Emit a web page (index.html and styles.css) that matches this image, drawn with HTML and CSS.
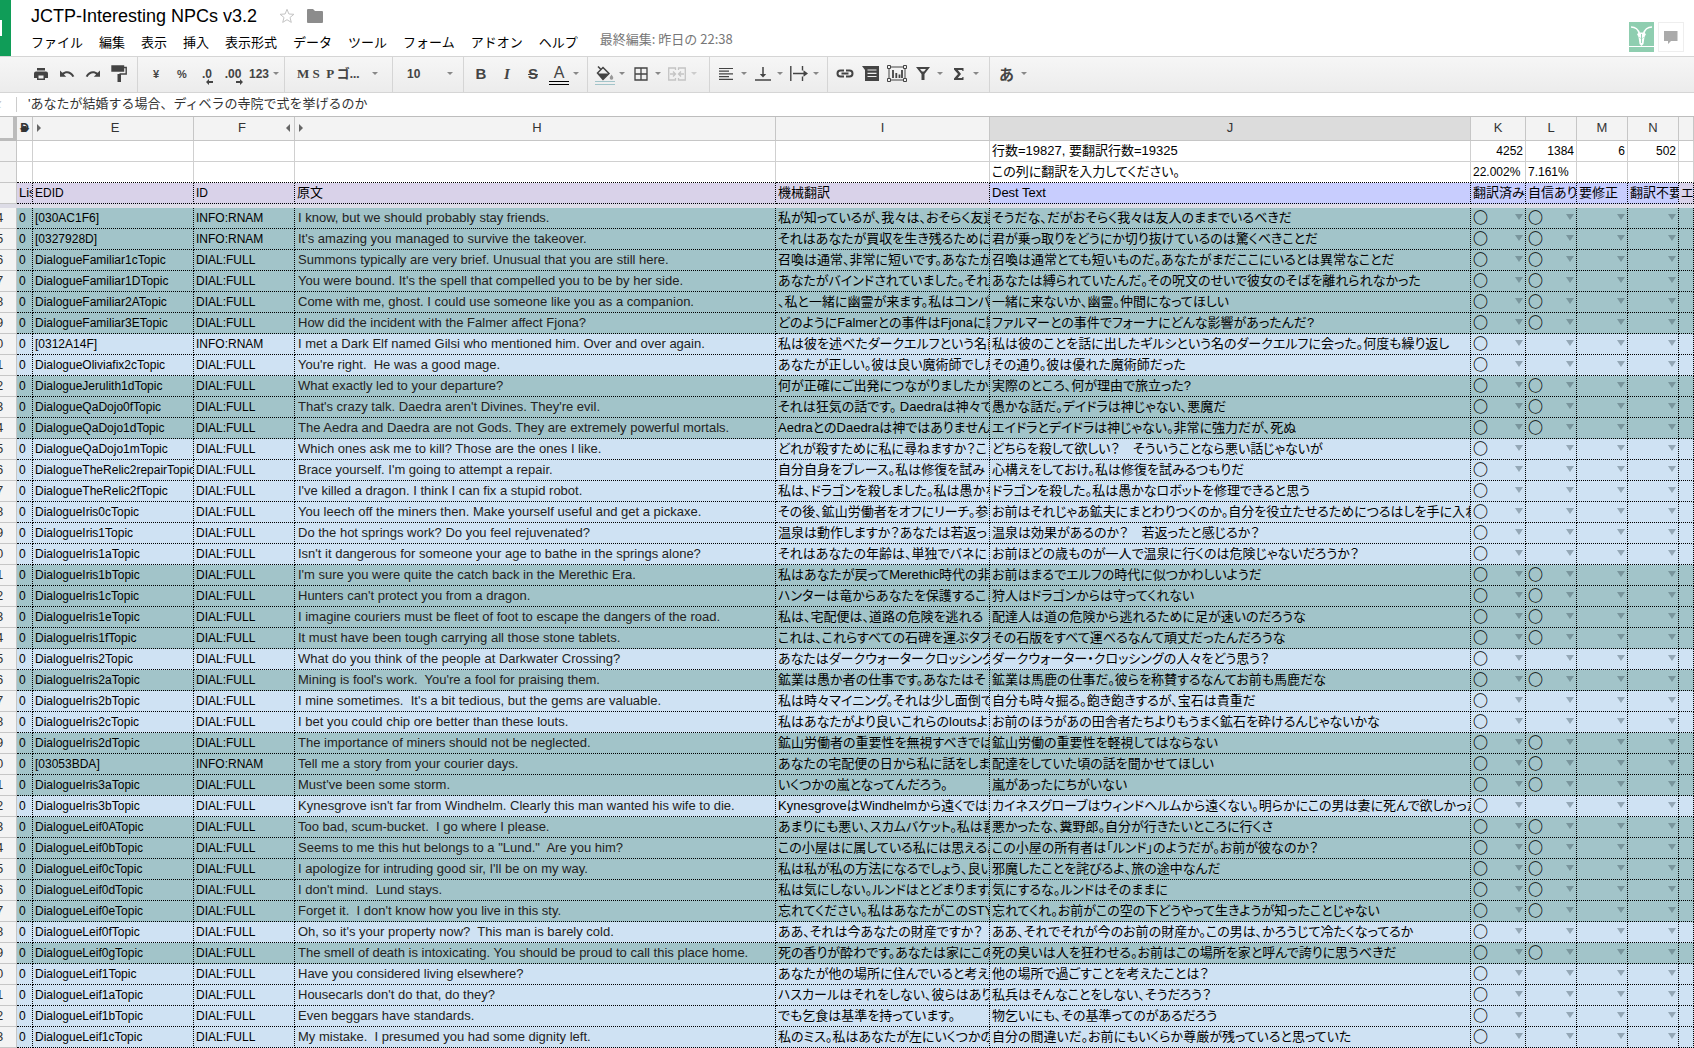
FILE: index.html
```html
<!DOCTYPE html>
<html lang="ja">
<head>
<meta charset="utf-8">
<meta name="viewport" content="width=device-width, initial-scale=1">
<title>JCTP-Interesting NPCs v3.2</title>
<link rel="stylesheet" href="styles.css">
</head>
<body>
<header class="masthead">
  <a class="home" href="#" aria-label="スプレッドシート"><span class="home-mark"></span></a>
  <div class="doc">
    <div class="doc-title">
      <h1>JCTP-Interesting NPCs v3.2</h1>
      <button class="plain" aria-label="スター"><svg width="16" height="16" viewBox="0 0 16 16"><path d="M8 1.3l1.9 4.7 5 .3-3.9 3.2 1.3 4.9L8 11.7l-4.3 2.7L5 9.500 1.100 6.300l5-.3z" fill="none" stroke="#c4c4c4"/></svg></button>
      <button class="plain" aria-label="フォルダ"><svg width="16" height="14" viewBox="0 0 16 14"><path d="M0 1a1 1 0 0 1 1-1h5l2 2h7a1 1 0 0 1 1 1v10a1 1 0 0 1-1 1H1a1 1 0 0 1-1-1z" fill="#8c8c8c"/></svg></button>
    </div>
    <nav class="menus">
      <button>ファイル</button><button>編集</button><button>表示</button><button>挿入</button><button>表示形式</button><button>データ</button><button>ツール</button><button>フォーム</button><button>アドオン</button><button>ヘルプ</button>
      <a class="last-edit" href="#">最終編集: 昨日の 22:38</a>
    </nav>
  </div>
  <div class="people">
    <button class="avatar" aria-label="共同編集者"><svg width="25" height="24" viewBox="0 0 25 24"><path d="M2 4c5 0 7.500 3 8.500 7M23 4c-5 0-7.500 3-8.500 7" fill="none" stroke="#fff" stroke-width="1.500"/><path d="M8 11l2.500-1.500h4L17 11l-1.500 3-1 7-2 2-2-2-1-7z" fill="#fff"/><path d="M12.500 11v9M10.500 14.500l1 .8M14.500 14.500l-1 .8" stroke="#8fceb0" stroke-width=".9"/></svg></button>
    <button class="chat" aria-label="コメント"><svg width="14" height="13" viewBox="0 0 14 13"><path d="M0 0h13.500v10H7l-3 3v-3H0z" fill="#aaa"/></svg></button>
  </div>
</header>

<div class="toolbar" role="toolbar" aria-label="ツールバー">
  <div class="group g-file">
    <button aria-label="印刷"><svg width="16" height="16" viewBox="0 0 16 16"><path d="M4 2h8v2.500H4zM3 5.500h10a2 2 0 0 1 2 2V12h-3v2H4v-2H1V7.500a2 2 0 0 1 2-2zm2.500 4v3h5v-3z" fill="#444" fill-rule="evenodd"/></svg></button>
    <button aria-label="元に戻す"><svg width="16" height="16" viewBox="0 0 16 16"><path d="M1 4.500v6.200h6.200L4.900 8.400C7 6.500 11 6.500 13.400 11l1.900-.8C12.500 4.500 7 4 3.300 6.800z" fill="#444"/></svg></button>
    <button aria-label="やり直し"><svg width="16" height="16" viewBox="0 0 16 16"><path d="M15 4.500v6.200H8.800l2.300-2.300C9 6.500 5 6.500 2.600 11l-1.900-.8C3.500 4.500 9 4 12.700 6.800z" fill="#444"/></svg></button>
    <button aria-label="書式のコピー"><svg width="16" height="18" viewBox="0 0 16 18"><path d="M1 1h11.500v5H1zM12 2.500h3.200V9H8.500" fill="none" stroke="#444" stroke-width="1.400"/><path d="M1 1h11.500v5H1zM6.500 9h3.500v8H6.500z" fill="#444"/></svg></button>
  </div>
  <div class="group g-num">
    <button class="bold">¥</button>
    <button class="bold">%</button>
    <button class="bold dec" aria-label="小数点以下の桁数を減らす">.0<svg width="8" height="6" viewBox="0 0 8 6"><path d="M0 3l3-3v2h4v2H3v2z" fill="#444"/></svg></button>
    <button class="bold dec" aria-label="小数点以下の桁数を増やす">.00<svg width="8" height="6" viewBox="0 0 8 6"><path d="M8 3L5 0v2H1v2h4v2z" fill="#444"/></svg></button>
    <button class="bold more">123<i class="caret"></i></button>
  </div>
  <div class="group g-font">
    <button class="picker serif"><span>M S&nbsp; P ゴ...</span><i class="caret"></i></button>
  </div>
  <div class="group g-size">
    <button class="picker"><span>10</span><i class="caret"></i></button>
  </div>
  <div class="group g-style">
    <button aria-label="太字" class="glyph"><b>B</b></button>
    <button aria-label="斜体" class="glyph slant"><i>I</i></button>
    <button aria-label="取り消し線" class="glyph"><s>S</s></button>
    <button aria-label="テキストの色" class="drop"><span class="swatch ink">A</span><i class="caret"></i></button>
  </div>
  <div class="group g-cell">
    <button aria-label="塗りつぶしの色" class="drop"><span class="swatch fill"><svg width="18" height="15" viewBox="0 0 18 15"><path d="M2 .5l3.500 3.500M1.500 7L7 1.500 13 7.500 7 13.500z" fill="none" stroke="#444" stroke-width="1.500"/><path d="M1.500 7.500h11L7 13.500z" fill="#444"/><path d="M15.500 8.500c1.200 1.800 1.800 2.600 1.800 3.500a1.800 1.800 0 0 1-3.600 0c0-.9.600-1.700 1.800-3.500z" fill="#999"/></svg></span><i class="caret"></i></button>
    <button aria-label="枠線" class="drop"><span class="ico"><svg width="14" height="14" viewBox="0 0 14 14"><path d="M1 1h12v12H1zM7 1v12M1 7h12" fill="none" stroke="#444" stroke-width="1.300"/></svg></span><i class="caret"></i></button>
    <button aria-label="セルを結合" class="drop" disabled><span class="ico"><svg width="18" height="14" viewBox="0 0 18 14"><path d="M7.500 3V1H.7v12h6.800v-2M10.500 3V1h6.800v12h-6.800v-2" fill="none" stroke="#c4c4c4" stroke-width="1.300"/><path d="M2 7h5M5 4.500L7.500 7 5 9.500M16 7h-5M13 4.500L10.500 7 13 9.500" fill="none" stroke="#c4c4c4" stroke-width="1.300"/></svg></span><i class="caret"></i></button>
  </div>
  <div class="group g-align">
    <button aria-label="水平方向の配置" class="drop"><span class="ico"><svg width="15" height="12" viewBox="0 0 15 12"><path d="M0 .5h14M0 3.200h10M0 5.900h14M0 8.600h10M0 11.300h14" stroke="#444" stroke-width="1.200"/></svg></span><i class="caret"></i></button>
    <button aria-label="垂直方向の配置" class="drop"><span class="ico"><svg width="16" height="15" viewBox="0 0 16 15"><path d="M0 14h16M8 1v8" stroke="#444" stroke-width="1.500"/><path d="M4.800 8h6.400L8 11.500z" fill="#444"/></svg></span><i class="caret"></i></button>
    <button aria-label="テキストの折り返し" class="drop"><span class="ico"><svg width="18" height="15" viewBox="0 0 18 15"><path d="M.8 0v15M12.500 0v4.500M12.500 10.500V15M3 7.500h11" stroke="#444" stroke-width="1.400"/><path d="M13.500 4.300L18 7.500l-4.500 3.200z" fill="#444"/></svg></span><i class="caret"></i></button>
  </div>
  <div class="group g-insert">
    <button aria-label="リンク"><svg width="18" height="9" viewBox="0 0 18 9"><path d="M8 7.500H4.500a3 3 0 0 1 0-6H8M10 1.500h3.500a3 3 0 0 1 0 6H10M5.500 4.500h7" fill="none" stroke="#444" stroke-width="2"/></svg></button>
    <button aria-label="コメントを挿入"><svg width="18" height="15" viewBox="0 0 18 15"><path d="M0 0h17v15H3V4z" fill="#444"/><path d="M5.500 4h9M5.500 7.300h9M5.500 10.500h9" stroke="#eee" stroke-width="1.200"/></svg></button>
    <button aria-label="グラフを挿入"><svg width="20" height="17" viewBox="0 0 20 17"><path d="M2 2h16v13H2z" fill="none" stroke="#444"/><path d="M.5.500h3v3h-3zM16.500.500h3v3h-3zM.5 13.500h3v3h-3zM16.500 13.500h3v3h-3z" fill="#f2f2f2" stroke="#444"/><path d="M6 5v8M9.300 8v5M12.500 9.500V13M15 5v8" stroke="#444" stroke-width="1.800"/></svg></button>
    <button aria-label="フィルタ" class="drop"><span class="ico"><svg width="14" height="13" viewBox="0 0 14 13"><path d="M0 0h14L8.500 7v6h-3V7zm4 2l2 2.500h2L10 2z" fill="#444" fill-rule="evenodd"/></svg></span><i class="caret"></i></button>
    <button aria-label="関数" class="drop"><span class="ico"><svg width="10" height="12" viewBox="0 0 10 12"><path d="M0 0h9.500v3H8.300V2H3.800l3.200 4-3.200 4h4.500V9h1.200v3H0v-1.500L4 6 0 1.500z" fill="#444"/></svg></span><i class="caret"></i></button>
  </div>
  <div class="group g-ime">
    <button class="drop"><span class="ico ime">あ</span><i class="caret"></i></button>
  </div>
</div>

<div class="formula">
  <label class="fx" for="formula-input">fx</label>
  <input id="formula-input" type="text" value="'あなたが結婚する場合、ディベラの寺院で式を挙げるのか">
</div>

<table class="sheet">
  <colgroup><col class="c-num"><col class="c-d"><col class="c-e"><col class="c-f"><col class="c-h"><col class="c-i"><col class="c-j"><col class="c-k"><col class="c-l"><col class="c-l"><col class="c-l"><col></colgroup>
  <thead>
    <tr class="letters">
      <th class="corner"></th>
      <th class="tiny"><span>◂</span>D<span>▸</span></th>
      <th><div class="letter"><i class="tri right"></i><span>E</span></div></th>
      <th><div class="letter"><span>F</span><i class="tri left"></i></div></th>
      <th><div class="letter"><i class="tri right"></i><span>H</span></div></th>
      <th>I</th><th class="current">J</th><th>K</th><th>L</th><th>M</th><th>N</th><th></th>
    </tr>
    <tr class="free">
      <th></th><td></td><td></td><td></td><td></td><td></td><td>行数=19827, 要翻訳行数=19325</td><td class="n">4252</td><td class="n">1384</td><td class="n">6</td><td class="n">502</td><td></td>
    </tr>
    <tr class="free above-names">
      <th></th><td></td><td></td><td></td><td></td><td></td><td>この列に翻訳を入力してください。</td><td class="latin">22.002%</td><td class="latin">7.161%</td><td></td><td></td><td></td>
    </tr>
    <tr class="names">
      <th></th><td>List</td><td class="latin">EDID</td><td class="latin">ID</td><td>原文</td><td>機械翻訳</td><td class="entry">Dest Text</td><td class="entry">翻訳済み</td><td class="entry">自信あり</td><td class="entry">要修正</td><td class="entry">翻訳不要</td><td>エ</td>
    </tr>
    <tr class="freeze"><td colspan="12"></td></tr>
  </thead>
  <tbody id="rows"></tbody>
</table>
<script src="script.js"></script>
</body>
</html>
```

FILE: script.js
```js
// EDID | ID | source text | machine translation | translation | confident (1/0)
const data = `
[030AC1F6]|INFO:RNAM|I know, but we should probably stay friends.|私が知っているが、我々は、おそらく友達|そうだな、だがおそらく我々は友人のままでいるべきだ|1
[0327928D]|INFO:RNAM|It's amazing you managed to survive the takeover.|それはあなたが買収を生き残るために|君が乗っ取りをどうにか切り抜けているのは驚くべきことだ|1
DialogueFamiliar1cTopic|DIAL:FULL|Summons typically are very brief. Unusual that you are still here.|召喚は通常、非常に短いです。あなたが|召喚は通常とても短いものだ。あなたがまだここにいるとは異常なことだ|1
DialogueFamiliar1DTopic|DIAL:FULL|You were bound. It's the spell that compelled you to be by her side.|あなたがバインドされていました。それは|あなたは縛られていたんだ。その呪文のせいで彼女のそばを離れられなかった|1
DialogueFamiliar2ATopic|DIAL:FULL|Come with me, ghost. I could use someone like you as a companion.|、私と一緒に幽霊が来ます。私はコンパ|一緒に来ないか、幽霊。仲間になってほしい|1
DialogueFamiliar3ETopic|DIAL:FULL|How did the incident with the Falmer affect Fjona?|どのようにFalmerとの事件はFjonaに影響|ファルマーとの事件でフォーナにどんな影響があったんだ?|1
[0312A14F]|INFO:RNAM|I met a Dark Elf named Gilsi who mentioned him. Over and over again.|私は彼を述べたダークエルフという名前|私は彼のことを話に出したギルシという名のダークエルフに会った。何度も繰り返し|0
DialogueOliviafix2cTopic|DIAL:FULL|You're right.  He was a good mage.|あなたが正しい。彼は良い魔術師でした|その通り。彼は優れた魔術師だった|0
DialogueJerulith1dTopic|DIAL:FULL|What exactly led to your departure?|何が正確にご出発につながりましたか|実際のところ、何が理由で旅立った?|1
DialogueQaDojo0fTopic|DIAL:FULL|That's crazy talk. Daedra aren't Divines. They're evil.|それは狂気の話です。 Daedraは神々で|愚かな話だ。デイドラは神じゃない、悪魔だ|1
DialogueQaDojo1dTopic|DIAL:FULL|The Aedra and Daedra are not Gods. They are extremely powerful mortals.|AedraとのDaedraは神ではありません。|エイドラとデイドラは神じゃない。非常に強力だが、死ぬ|1
DialogueQaDojo1mTopic|DIAL:FULL|Which ones ask me to kill? Those are the ones I like.|どれが殺すために私に尋ねますか？こ|どちらを殺して欲しい？　そういうことなら悪い話じゃないが|0
DialogueTheRelic2repairTopic|DIAL:FULL|Brace yourself. I'm going to attempt a repair.|自分自身をブレース。私は修復を試み|心構えをしておけ。私は修復を試みるつもりだ|0
DialogueTheRelic2fTopic|DIAL:FULL|I've killed a dragon. I think I can fix a stupid robot.|私は、ドラゴンを殺しました。私は愚かな|ドラゴンを殺した。私は愚かなロボットを修理できると思う|0
DialogueIris0cTopic|DIAL:FULL|You leech off the miners then. Make yourself useful and get a pickaxe.|その後、鉱山労働者をオフにリーチ。参|お前はそれじゃあ鉱夫にまとわりつくのか。自分を役立たせるためにつるはしを手に入れ|0
DialogueIris1Topic|DIAL:FULL|Do the hot springs work? Do you feel rejuvenated?|温泉は動作しますか？あなたは若返っ|温泉は効果があるのか？　若返ったと感じるか？|0
DialogueIris1aTopic|DIAL:FULL|Isn't it dangerous for someone your age to bathe in the springs alone?|それはあなたの年齢は、単独でバネに|お前ほどの歳ものが一人で温泉に行くのは危険じゃないだろうか？|0
DialogueIris1bTopic|DIAL:FULL|I'm sure you were quite the catch back in the Merethic Era.|私はあなたが戻ってMerethic時代の非|お前はまるでエルフの時代に似つかわしいようだ|1
DialogueIris1cTopic|DIAL:FULL|Hunters can't protect you from a dragon.|ハンターは竜からあなたを保護すること|狩人はドラゴンからは守ってくれない|1
DialogueIris1eTopic|DIAL:FULL|I imagine couriers must be fleet of foot to escape the dangers of the road.|私は、宅配便は、道路の危険を逃れる|配達人は道の危険から逃れるために足が速いのだろうな|1
DialogueIris1fTopic|DIAL:FULL|It must have been tough carrying all those stone tablets.|これは、これらすべての石碑を運ぶタフ|その石版をすべて運べるなんて頑丈だったんだろうな|1
DialogueIris2Topic|DIAL:FULL|What do you think of the people at Darkwater Crossing?|あなたはダークウォータークロッシング|ダークウォーター・クロッシングの人々をどう思う？|0
DialogueIris2aTopic|DIAL:FULL|Mining is fool's work.  You're a fool for praising them.|鉱業は愚か者の仕事です。あなたはそ|鉱業は馬鹿の仕事だ。彼らを称賛するなんてお前も馬鹿だな|1
DialogueIris2bTopic|DIAL:FULL|I mine sometimes.  It's a bit tedious, but the gems are valuable.|私は時々マイニング。それは少し面倒で|自分も時々掘る。飽き飽きするが、宝石は貴重だ|0
DialogueIris2cTopic|DIAL:FULL|I bet you could chip ore better than these louts.|私はあなたがより良いこれらのloutsより|お前のほうがあの田舎者たちよりもうまく鉱石を砕けるんじゃないかな|0
DialogueIris2dTopic|DIAL:FULL|The importance of miners should not be neglected.|鉱山労働者の重要性を無視すべきでは|鉱山労働の重要性を軽視してはならない|1
[03053BDA]|INFO:RNAM|Tell me a story from your courier days.|あなたの宅配便の日から私に話をしま|配達をしていた頃の話を聞かせてほしい|1
DialogueIris3aTopic|DIAL:FULL|Must've been some storm.|いくつかの嵐となってんだろう。|嵐があったにちがいない|1
DialogueIris3bTopic|DIAL:FULL|Kynesgrove isn't far from Windhelm. Clearly this man wanted his wife to die.|KynesgroveはWindhelmから遠くではあり|カイネスグローブはウィンドヘルムから遠くない。明らかにこの男は妻に死んで欲しかった|0
DialogueLeif0ATopic|DIAL:FULL|Too bad, scum-bucket.  I go where I please.|あまりにも悪い、スカムバケット。私は喜|悪かったな、糞野郎。自分が行きたいところに行くさ|1
DialogueLeif0bTopic|DIAL:FULL|Seems to me this hut belongs to a "Lund."  Are you him?|この小屋はに属している私には思える。|この小屋の所有者は「ルンド」のようだが。お前が彼なのか？|1
DialogueLeif0cTopic|DIAL:FULL|I apologize for intruding good sir, I'll be on my way.|私は私が私の方法になるでしょう、良い|邪魔したことを詫びるよ、旅の途中なんだ|1
DialogueLeif0dTopic|DIAL:FULL|I don't mind.  Lund stays.|私は気にしない。ルンドはとどまります。|気にするな。ルンドはそのままに|1
DialogueLeif0eTopic|DIAL:FULL|Forget it.  I don't know how you live in this sty.|忘れてください。私はあなたがこのSTY|忘れてくれ。お前がこの空の下どうやって生きようが知ったことじゃない|1
DialogueLeif0fTopic|DIAL:FULL|Oh, so it's your property now?  This man is barely cold.|ああ、それは今あなたの財産ですか？|ああ、それでそれが今のお前の財産か。この男は、かろうじて冷たくなってるか|0
DialogueLeif0gTopic|DIAL:FULL|The smell of death is intoxicating. You should be proud to call this place home.|死の香りが酔わです。あなたは家にこの|死の臭いは人を狂わせる。お前はこの場所を家と呼んで誇りに思うべきだ|1
DialogueLeif1Topic|DIAL:FULL|Have you considered living elsewhere?|あなたが他の場所に住んでいると考え|他の場所で過ごすことを考えたことは？|0
DialogueLeif1aTopic|DIAL:FULL|Housecarls don't do that, do they?|ハスカールはそれをしない、彼らはあり|私兵はそんなことをしない、そうだろう？|0
DialogueLeif1bTopic|DIAL:FULL|Even beggars have standards.|でも乞食は基準を持っています。|物乞いにも、その基準ってのがあるだろう|0
DialogueLeif1cTopic|DIAL:FULL|My mistake.  I presumed you had some dignity left.|私のミス。私はあなたが左にいくつかの|自分の間違いだ。お前にもいくらか尊厳が残っていると思っていた|0
`.trim().split('\n').map(line => line.split('|'));

const flags = ['翻訳済み', '自信あり', '要修正', '翻訳不要'];
const body = document.getElementById('rows');

function cell(tr, text, className) {
  const td = tr.insertCell();
  td.textContent = text;
  if (className) td.className = className;
  return td;
}

data.forEach(([edid, id, source, machine, dest, sure], index) => {
  const tr = body.insertRow();
  tr.className = sure === '1' ? 'sure' : 'draft';
  const th = document.createElement('th');
  th.scope = 'row';
  th.textContent = (index + 4) % 10;
  tr.append(th);
  cell(tr, '0', 'latin');
  cell(tr, edid, 'latin');
  cell(tr, id, 'latin');
  cell(tr, source, 'source');
  cell(tr, machine);
  cell(tr, dest);
  flags.forEach((name, i) => {
    const select = document.createElement('select');
    select.setAttribute('aria-label', name);
    select.add(new Option('', ''));
    select.add(new Option('○', '○'));
    select.value = i === 0 || (i === 1 && sure === '1') ? '○' : '';
    cell(tr, '', 'flag').append(select);
  });
  cell(tr, '');
});
```

FILE: styles.css
```css
* { box-sizing: border-box; }

body {
  margin: 0;
  overflow: hidden;
  background: #fff;
  color: #000;
  font: 13px/20px "Liberation Sans", "Noto Sans CJK JP", sans-serif;
}

button, input, select { margin: 0; font: inherit; color: inherit; }
button { padding: 0; border: 0; background: none; }
svg { display: block; }

/* title and menus */
.masthead { display: flex; height: 56px; }
.home { flex: none; display: flex; align-items: center; width: 11px; background: #109d58; }
.home-mark { width: 2px; height: 16px; background: #fff; }
.doc { flex: 1; padding: 4px 0 0 20px; }
.doc-title { display: flex; align-items: center; height: 24px; }
h1 { margin: 0 22px 0 0; font-size: 18px; line-height: 24px; font-weight: 400; }
.doc-title .plain { margin-right: 12px; }
.menus { display: flex; gap: 16px; height: 28px; align-items: center; white-space: nowrap; font-family: "Noto Sans CJK JP", sans-serif; }
.last-edit { margin: -6px 0 0 6px; color: #777; text-decoration: none; }
.people { flex: none; display: flex; gap: 4px; padding: 22px 10px 0 0; }
.avatar { width: 25px; height: 30px; background: #8fceb0; border-bottom: 5px solid #8fceb0; box-shadow: inset 0 -1px #fff; }
.chat { display: flex; align-items: center; justify-content: center; width: 26px; height: 30px; border: 1px solid #eee; }

/* toolbar */
.toolbar { display: flex; height: 37px; border: solid #d5d5d5; border-width: 1px 0; background: linear-gradient(#f6f6f6, #ececec); color: #444; }
.group { flex: none; display: flex; align-items: center; padding: 0 0 2px 4px; border-right: 1px solid #d5d5d5; }
.group:last-child { border: 0; }
.g-file { width: 138px; padding-left: 28px; }
.g-num { width: 147px; padding-left: 5px; }
.g-font { width: 108px; }
.g-size { width: 71px; }
.g-style { width: 124px; }
.g-cell { width: 122px; }
.g-align { width: 118px; }
.g-insert { width: 162px; }
.group button { display: flex; align-items: center; justify-content: center; width: 26px; height: 28px; white-space: nowrap; }
.group .bold { font-size: 12px; font-weight: 700; }
.group .bold:nth-child(-n+2) { font-size: 11px; }
.group .dec svg { align-self: flex-end; margin: 0 0 3px -6px; }
.group .more { width: 34px; gap: 4px; }
.group .drop { width: 36px; }
.drop .ico, .drop .swatch { display: flex; align-items: center; justify-content: center; width: 26px; }
.drop .caret { margin: 0 3px 0 2px; }
.caret { flex: none; width: 0; height: 0; border: solid transparent; border-width: 3px 3px 0; border-top-color: #888; }
[disabled] .caret { border-top-color: #ccc; }
.group .picker { flex: 1; justify-content: space-between; padding: 0 10px; font-size: 12px; font-weight: 700; }
.group .picker.serif { padding: 0 14px 0 8px; font: 700 13px/20px "Liberation Serif", "Noto Sans CJK JP", serif; }
.group .glyph { font-size: 15px; font-weight: 700; }
.group .slant { font-family: "Liberation Serif", serif; }
.drop .swatch { width: 21px; height: 19px; margin: 3px 2px 0 3px; align-items: flex-start; border-bottom: 4px double #000; font-size: 16px; line-height: 14px; }
.drop .swatch.fill { border-color: #a2c4c9; }
.ime { font: 700 15px/20px "Noto Sans CJK JP", sans-serif; }

/* formula bar */
.formula { display: flex; align-items: center; height: 23px; }
.fx { width: 17px; height: 15px; overflow: hidden; border-right: 1px solid #ccc; color: #bbb; font: italic 14px/14px "Liberation Serif", serif; text-indent: -9px; }
.formula input { flex: 1; height: 20px; margin-bottom: 2px; padding: 0 0 0 11px; border: 0; outline: 0; background: none; color: #333; font-family: "Liberation Sans", "Noto Sans CJK JP", sans-serif; }

/* grid */
.sheet { width: 100%; table-layout: fixed; border-spacing: 0; border-top: 1px solid #bdbdbd; font-family: "Liberation Sans", "Noto Sans CJK JP", sans-serif; font-feature-settings: "palt"; }
.c-num { width: 17px; }
.c-d { width: 16px; }
.c-e { width: 161px; }
.c-f { width: 101px; }
.c-h, .c-j { width: 481px; }
.c-i { width: 214px; }
.c-k { width: 55px; }
.c-l { width: 51px; }

.sheet th, .sheet td { height: 21px; padding: 0 2px; overflow: hidden; border: solid #d0d0d0; border-width: 0 1px 1px 0; line-height: 20px; vertical-align: top; text-align: left; font-weight: 400; white-space: pre; }
.sheet th { padding: 0; background: #f3f3f3; border-color: #c6c6c6; color: #333; }
.sheet .letters th { height: 24px; line-height: 22px; text-align: center; }
.sheet .letters .current { background: #dcdcdc; }
.sheet .letters .corner { border: solid #bbb; border-width: 0 4px 3px 0; }
.sheet .letters .tiny { font-size: 12px; font-weight: 700; }
.tiny span { margin: 0 -6px; }
.letter { display: flex; align-items: center; padding: 0 4px; }
.letter span { flex: 1; }
.tri { width: 0; height: 0; border: solid transparent; }
.tri.right { border-width: 4px 0 4px 4px; border-left-color: #666; }
.tri.left { border-width: 4px 4px 4px 0; border-right-color: #666; }

.sheet .n { text-align: right; font-size: 12px; }
.sheet .latin { font-size: 12px; }
.sheet .above-names td { border-bottom: 1px dotted #000; }
.sheet .names td { border: dotted #000; border-width: 0 1px 1px 0; background: #d9d2e9; }
.sheet .names .entry { background: #c8cdfe; }
.sheet .freeze td { height: 4px; padding: 0; border: 0; background: #dddce6; }

.sheet tbody td { border: dotted #000; border-width: 0 1px 1px 0; }
.sheet tbody th { text-indent: -4px; }
.sure { background: #a2c4c9; }
.draft { background: #cfe2f3; }
.sheet .source { padding: 0 3px; color: #222; }
.sheet .flag { position: relative; padding: 0; }
.flag::after { content: ""; position: absolute; top: 6px; right: 2px; border: solid transparent; border-width: 6px 4px 0; border-top-color: rgba(60, 80, 90, .4); pointer-events: none; }
.flag select { display: block; width: 100%; height: 18px; padding: 0 0 0 2px; border: 0; border-radius: 0; outline: 0; appearance: none; background: none; font: 700 15px/18px "Noto Sans CJK JP", sans-serif; }
```
